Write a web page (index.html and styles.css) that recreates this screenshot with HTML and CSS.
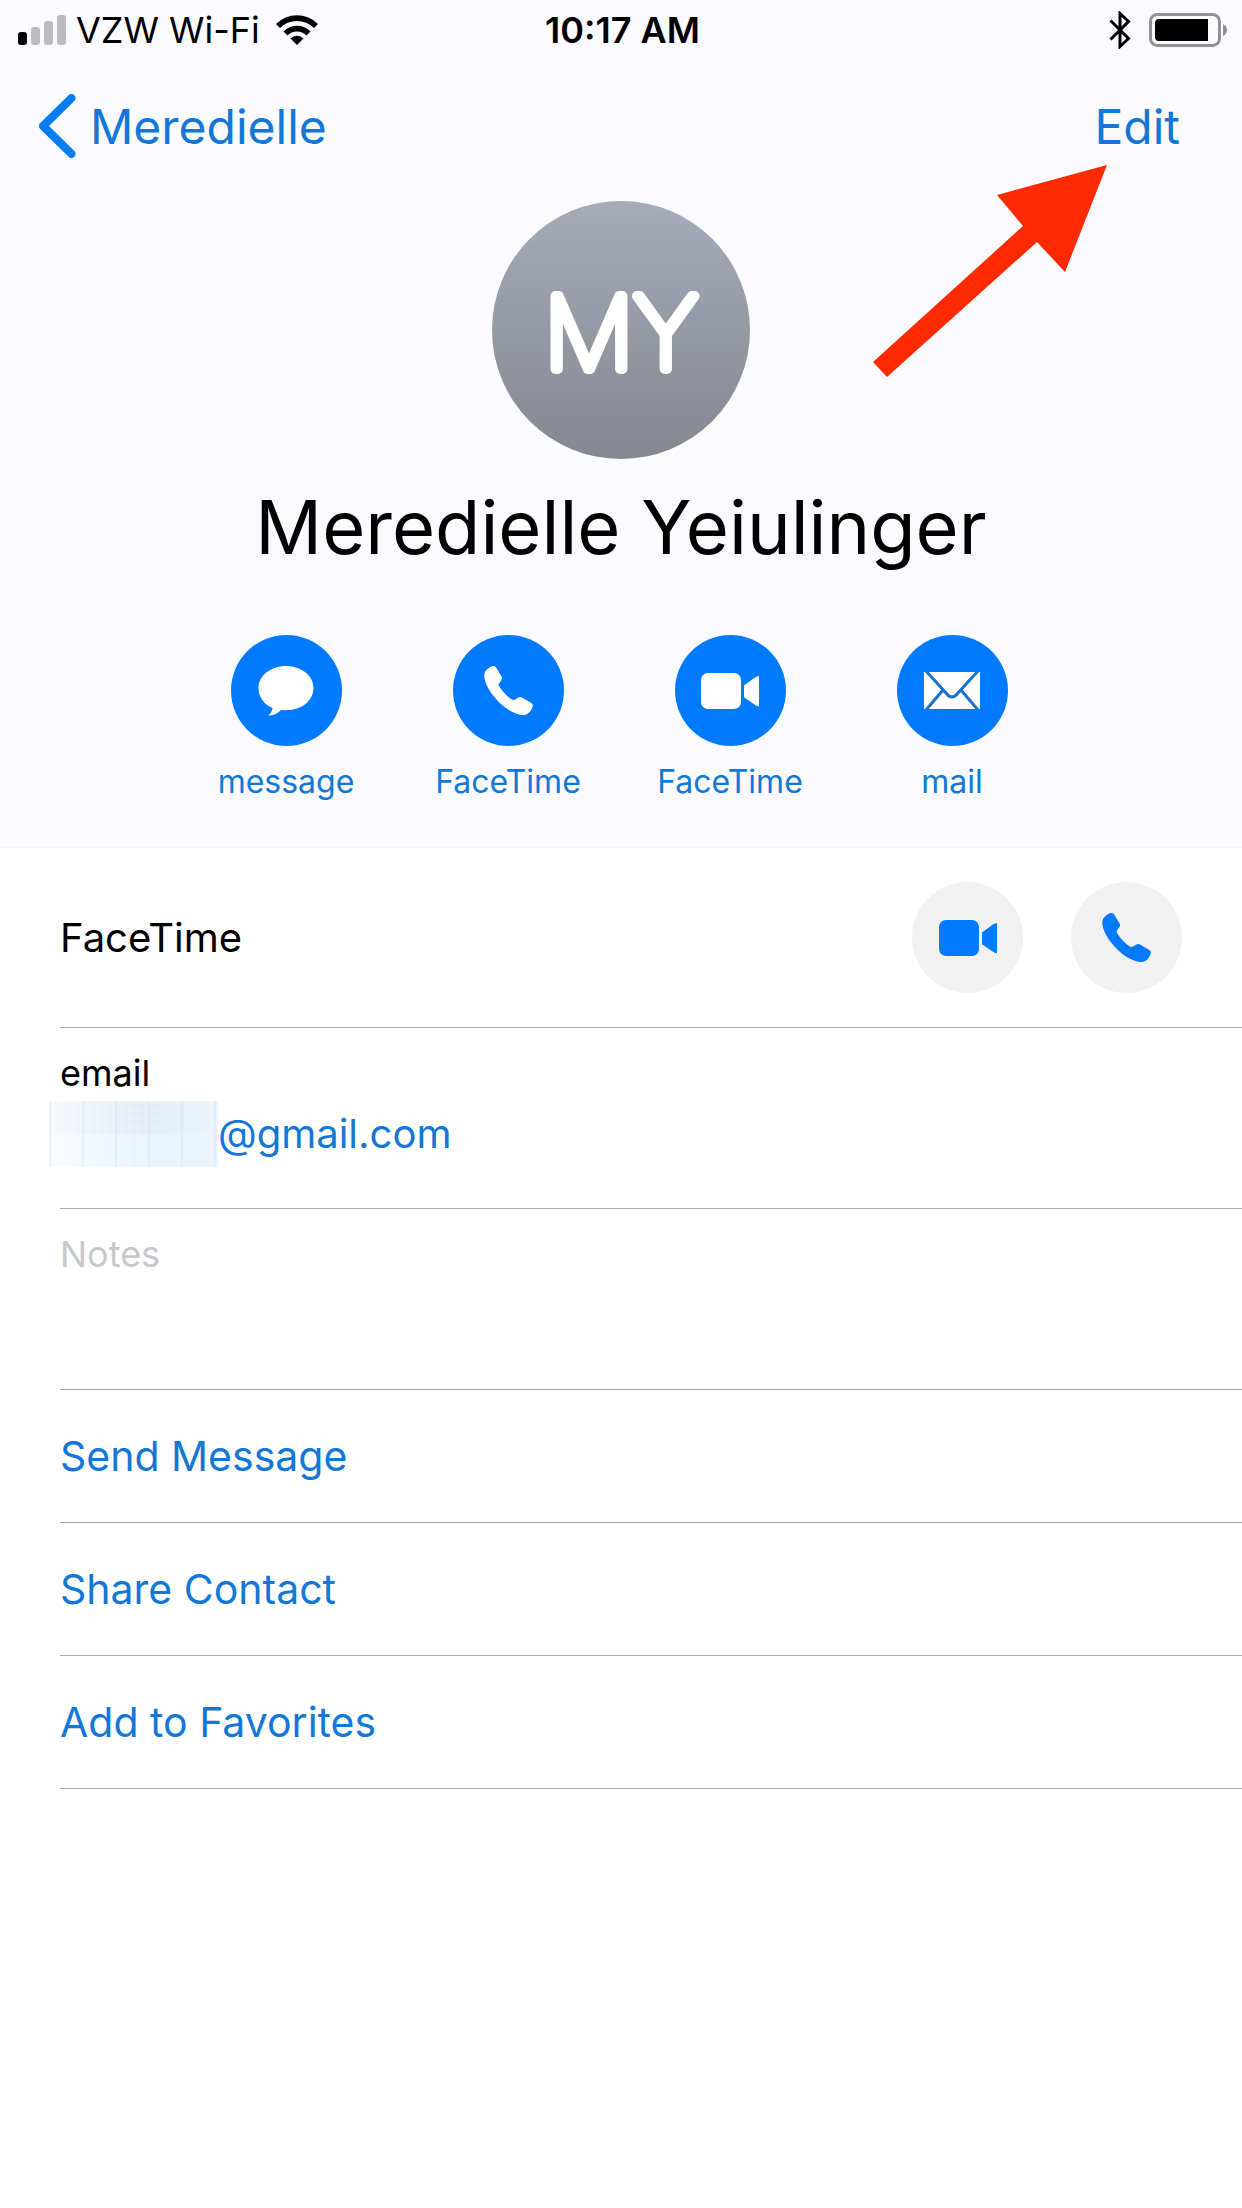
FILE: index.html
```html
<!DOCTYPE html>
<html lang="en">
<head>
<meta charset="utf-8">
<meta name="viewport" content="width=device-width, initial-scale=1">
<title>Meredielle Yeiulinger</title>
<link rel="stylesheet" href="styles.css">
</head>
<body>
<svg class="sprite" aria-hidden="true">
  <symbol id="video" viewBox="0 0 58 36">
    <rect width="40" height="36" rx="7"/>
    <path d="M43 12.500 L53.500 4.800 Q56 3.200 58 3 V33.400 Q56 33 53.500 31.400 L43 24.300Z"/>
  </symbol>
  <symbol id="phone" viewBox="0 0 49 49">
    <path d="M0.300 10 C0 5 5 0.500 9.500 0 Q11.500 0 12.500 2 L17.500 10.500 Q18.600 12.500 17.200 14.300 L15 17.500 Q14.300 19 15.300 20.500 C18.500 25.500 23 30.500 28 33.600 Q29.800 34.700 31.500 33.300 L34.500 31.400 Q36.300 30.600 38 31.500 L47 36.800 Q49.500 38.500 48.600 40.500 C47.500 44.500 44.500 49 39.500 49 C31 49 20 42 12.500 33.500 C5.500 25.500 0.500 17 0.300 10Z"/>
  </symbol>
</svg>

<header class="header">
  <div class="status">
    <div class="status-side">
      <svg class="signal" viewBox="0 0 48 30" aria-hidden="true">
        <rect y="17" width="9" height="13" rx="3"/>
        <g fill="#bcbbc0"><rect x="13" y="12" width="9" height="18" rx="3"/><rect x="26" y="6" width="9" height="24" rx="3"/><rect x="39" width="9" height="30" rx="3"/></g>
      </svg>
      <span class="carrier">VZW Wi-Fi</span>
      <svg class="wifi" viewBox="0 0 42 30" aria-hidden="true">
        <path d="M0 9 A29.500 29.500 0 0 1 42 9 L38 13 A24 24 0 0 0 4 13Z"/>
        <path d="M7.500 16.500 A19 19 0 0 1 34.500 16.500 L30.500 20.500 A13.500 13.500 0 0 0 11.500 20.500Z"/>
        <path d="M14.500 23.500 A9.300 9.300 0 0 1 27.500 23.500 L21 30Z"/>
      </svg>
    </div>
    <time class="clock">10:17 AM</time>
    <div class="status-side status-end">
      <svg class="bluetooth" viewBox="0 0 22 38" aria-hidden="true">
        <path d="M1.500 9.500 L19.500 27.500 L11 35.500 V2.500 L19.500 10.500 L1.500 28.500" fill="none" stroke="#000" stroke-width="3"/>
      </svg>
      <svg class="battery" viewBox="0 0 78 34" aria-hidden="true">
        <rect x="1.500" y="1.500" width="69" height="31" rx="7" fill="none" stroke="#929196" stroke-width="3"/>
        <path d="M10 6 H59 V28 H10 Q6 28 6 24 V10 Q6 6 10 6Z"/>
        <path d="M74 11 Q78 13 78 17 T74 23Z" fill="#929196"/>
      </svg>
    </div>
  </div>

  <nav class="nav">
    <a class="back" href="#contacts">
      <svg class="chevron" viewBox="0 0 36 62" aria-hidden="true"><path d="M32 4 L4.500 31 L32 58" fill="none" stroke="#087cf5" stroke-width="8" stroke-linecap="round" stroke-linejoin="round"/></svg>
      <span>Meredielle</span>
    </a>
    <button class="edit" type="button">Edit</button>
    <svg class="arrow" viewBox="0 0 234 212" aria-hidden="true"><path d="M234 0 L192 107 L164 77 L14 212 L0 197 L150 61 L124 30Z" fill="#ff2a00"/></svg>
  </nav>

  <svg class="avatar" viewBox="0 0 258 258" role="img" aria-label="Initials">
    <defs><linearGradient id="shade" x1="0" y1="0" x2="0" y2="1"><stop offset="0" stop-color="#a5abb9"/><stop offset="1" stop-color="#858790"/></linearGradient></defs>
    <circle cx="129" cy="129" r="129" fill="url(#shade)"/>
    <text class="initials" x="129" y="168" text-anchor="middle">MY</text>
  </svg>
  <h1 class="name">Meredielle Yeiulinger</h1>

  <div class="actions">
    <button class="action" type="button">
      <span class="disc"><svg width="56" height="50" viewBox="0 0 56 50" aria-hidden="true"><path d="M28 0 C43 0 55.500 9.500 55.500 22 C55.500 34 44 44 30 44 Q26 44.300 23 44 Q18 49.500 10 49.500 Q14 46.500 14.500 42 C6 38.500 0.500 31 0.500 22 C0.500 9.500 13 0 28 0Z"/></svg></span>
      <span>message</span>
    </button>
    <button class="action" type="button">
      <span class="disc"><svg width="49" height="49" aria-hidden="true"><use href="#phone"/></svg></span>
      <span>FaceTime</span>
    </button>
    <button class="action" type="button">
      <span class="disc"><svg width="58" height="36" aria-hidden="true"><use href="#video"/></svg></span>
      <span>FaceTime</span>
    </button>
    <button class="action" type="button">
      <span class="disc"><svg width="56" height="37" viewBox="0 0 56 37" aria-hidden="true"><rect width="56" height="37"/><path d="M2 -1 L22 21 Q28 29 34 21 L54 -1 M19 18 L2 38 M37 18 L54 38" fill="none" stroke="#1873cf" stroke-width="3"/></svg></span>
      <span>mail</span>
    </button>
  </div>
</header>

<main class="list">
  <section class="row facetime">
    <h2 class="title">FaceTime</h2>
    <button class="call" type="button" aria-label="Video call"><svg width="58" height="36" aria-hidden="true"><use href="#video"/></svg></button>
    <button class="call" type="button" aria-label="Audio call"><svg width="49" height="49" aria-hidden="true"><use href="#phone"/></svg></button>
  </section>
  <section class="row field">
    <h2 class="label">email</h2>
    <a class="email" href="#email"><span class="redacted"></span><span>@gmail.com</span></a>
  </section>
  <section class="row field">
    <textarea class="notes" placeholder="Notes" aria-label="Notes"></textarea>
  </section>
  <button class="row link" type="button">Send Message</button>
  <button class="row link" type="button">Share Contact</button>
  <button class="row link" type="button">Add to Favorites</button>
</main>
</body>
</html>
```

FILE: styles.css
```css
* { box-sizing: border-box; }

body {
  margin: 0;
  background: #fff;
  color: #000;
  font-family: Inter, "Liberation Sans", sans-serif;
  font-size: 40px;
}

button {
  margin: 0;
  padding: 0;
  border: 0;
  background: none;
  color: #1277d6;
  font: inherit;
  cursor: pointer;
}

a { color: #1277d6; text-decoration: none; }
h1, h2 { margin: 0; font-weight: 400; }
svg { display: block; flex: none; }
.sprite { position: absolute; width: 0; height: 0; }

.header {
  display: flex;
  flex-direction: column;
  align-items: center;
  padding-bottom: 45px;
  border-bottom: 1px solid #f4f4f7;
  background: #fafaff;
}

/* Status bar */
.status {
  display: grid;
  grid-template-columns: 1fr auto 1fr;
  align-items: center;
  width: 100%;
  height: 60px;
  padding: 0 15px 0 18px;
  font-size: 36px;
}
.status-side { display: flex; align-items: center; }
.status-end { justify-content: flex-end; gap: 18px; }
.signal { width: 48px; height: 30px; }
.carrier { margin: 0 16px 0 10px; }
.wifi { width: 42px; height: 30px; }
.clock { font-weight: 600; }
.bluetooth { width: 22px; height: 38px; }
.battery { width: 78px; height: 34px; }

/* Navigation bar */
.nav {
  position: relative;
  display: flex;
  justify-content: space-between;
  align-items: center;
  width: 100%;
  height: 132px;
  padding: 0 62px 0 38px;
  font-size: 48px;
}
.back { display: flex; align-items: center; gap: 14px; }
.chevron { width: 38px; height: 64px; }
.arrow { position: absolute; top: 105px; right: 135px; width: 234px; height: 212px; }

/* Contact card */
.avatar { width: 258px; height: 258px; margin-top: 9px; }
.initials {
  fill: #fff;
  stroke: #fff;
  stroke-width: 10px;
  stroke-linejoin: round;
  font-size: 100px;
  font-weight: 100;
}
.name { margin-top: 20px; font-size: 74px; line-height: 96px; }

.actions { display: flex; margin-top: 60px; padding-right: 4px; }
.action {
  display: flex;
  flex-direction: column;
  align-items: center;
  gap: 16px;
  width: 222px;
  font-size: 32px;
  line-height: 40px;
}
.disc {
  display: grid;
  place-items: center;
  width: 111px;
  height: 111px;
  border-radius: 50%;
  background: #007aff;
  fill: #fff;
}

/* Detail rows */
.list { padding-left: 60px; }
.row { border-bottom: 1px solid #a9a9ab; }
.facetime {
  display: flex;
  align-items: center;
  gap: 48px;
  height: 180px;
  padding-right: 60px;
}
.title { flex: 1; font-size: 40px; }
.call {
  display: grid;
  place-items: center;
  width: 111px;
  height: 111px;
  border-radius: 50%;
  background: #f1f1f2;
  fill: #007aff;
}
.field { height: 181px; padding-top: 23px; }
.label { font-size: 36px; line-height: 44px; }
.email {
  display: flex;
  align-items: center;
  margin: 6px 0 0 -11px;
  line-height: 64px;
}
.redacted {
  width: 169px;
  height: 66px;
  background:
    repeating-linear-gradient(90deg, #bcd9f440 0 2px, #ffffff00 2px 33px),
    repeating-linear-gradient(90deg, #ffffff28 0 2px, #ffffff00 2px 8px),
    repeating-linear-gradient(0deg, #ffffff28 0 2px, #ffffff00 2px 8px),
    linear-gradient(90deg, #ffffffb0 0, #ffffff00 60%),
    linear-gradient(90deg, #dcdfea90 0, #dcdfea60 60%, #dcdfea00) 0 0 / 100% 34px no-repeat,
    #e8f3fe;
}
.notes {
  display: block;
  width: 100%;
  height: 120px;
  padding: 0;
  border: 0;
  outline: 0;
  background: none;
  color: #000;
  font: 400 36px/44px Inter, "Liberation Sans", sans-serif;
  resize: none;
}
.notes::placeholder { color: #c7c7cb; opacity: 1; }
.link { display: block; width: 100%; height: 133px; font-size: 41px; text-align: left; }
```
